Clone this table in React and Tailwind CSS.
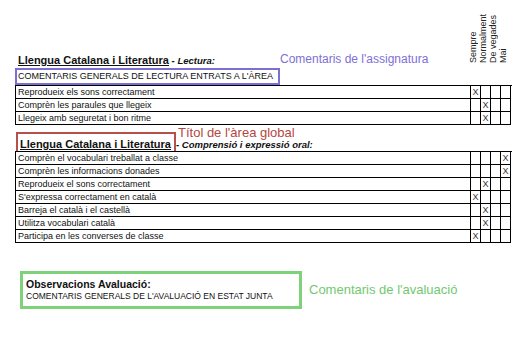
import React from "react";

const rows1 = [
  { text: "Reprodueix els sons correctament", mark: 0 },
  { text: "Comprèn les paraules que llegeix", mark: 1 },
  { text: "Llegeix amb seguretat i bon ritme", mark: 1 },
];

const rows2 = [
  { text: "Comprèn el vocabulari treballat a classe", mark: 3 },
  { text: "Comprèn les informacions donades", mark: 3 },
  { text: "Reprodueix el sons correctament", mark: 1 },
  { text: "S'expressa correctament en català", mark: 0 },
  { text: "Barreja el català i el castellà", mark: 1 },
  { text: "Utilitza vocabulari català", mark: 1 },
  { text: "Participa en les converses de classe", mark: 0 },
];

const headers = ["Sempre", "Normalment", "De vegades", "Mai"];

// one table of items with the 4 "X" columns
const Items = ({ rows }) => (
  <div className="w-[497px] border-t border-l border-black">
    {rows.map((r, i) => (
      <div key={i} className="flex h-[13px]">
        <div className="w-[455px] border-r border-b border-black pl-[2px] text-[9px] leading-[12px] text-[#111]">
          {r.text}
        </div>
        {[0, 1, 2, 3].map((c) => (
          <div
            key={c}
            className="w-[10px] border-r border-b border-black text-center text-[9px] leading-[12px] text-[#333]"
          >
            {r.mark === c ? "X" : ""}
          </div>
        ))}
      </div>
    ))}
  </div>
);

const App = () => {
  return (
    <div className="w-[532px] h-[338px] bg-white font-['Liberation_Sans',Arial,sans-serif] text-black overflow-hidden">
      <div className="pl-[15px]">
        {/* header: title + vertical column labels */}
        <div className="relative flex items-end h-[68px]">
          <div className="w-[455px] pl-[3px] pb-[1px] leading-[12px]">
            <span className="text-[11px] font-bold underline text-[#111]">Llengua Catalana i Literatura</span>
            <span className="text-[9.5px] font-bold italic text-[#111]"> - Lectura:</span>
          </div>
          <div className="absolute left-[265px] top-[52px] text-[12px] leading-[14px] text-[#7d70d6]">
            Comentaris de l'assignatura
          </div>
          <div className="flex self-start mt-[8px] -ml-[2px]">
            {headers.map((h) => (
              <div
                key={h}
                className="w-[10px] h-[55px] rotate-180 [writing-mode:vertical-rl] text-[9px] leading-[10px] text-[#222]"
              >
                {h}
              </div>
            ))}
          </div>
        </div>

        <div className="w-[265px] h-[17px] border-2 border-[#7b6fd4] pl-[1px] text-[9px] leading-[13px] text-[#111]">
          COMENTARIS GENERALS DE LECTURA ENTRATS A L'ÀREA
        </div>
        <Items rows={rows1} />

        {/* second area */}
        <div className="relative flex items-end h-[26px]">
          <div className="ml-[1px] h-[19px] border-2 border-[#b5514a] border-b-0 pl-[2px] pr-[3px] leading-[17px]">
            <span className="text-[11px] font-bold underline text-[#111]">Llengua Catalana i Literatura</span>
          </div>
          <span className="text-[9.5px] font-bold italic leading-[12px] text-[#111]"> - Comprensió i expressió oral:</span>
          <div className="absolute left-[163px] top-[1px] text-[13px] leading-[14px] text-[#b3473f]">
            Títol de l'àrea global
          </div>
        </div>
        <Items rows={rows2} />
      </div>

      {/* evaluation comments */}
      <div className="flex items-center mt-[28px] pl-[20px]">
        <div className="w-[282px] h-[38px] border-[3px] border-[#7ed27a] px-[3px] pt-[4px]">
          <div className="text-[10.5px] font-bold leading-[12px] text-[#111]">Observacions Avaluació:</div>
          <div className="text-[8.5px] leading-[12px] text-[#111]">COMENTARIS GENERALS DE L'AVALUACIÓ EN ESTAT JUNTA</div>
        </div>
        <div className="ml-[7px] text-[13px] leading-[16px] text-[#72c870]">Comentaris de l'avaluació</div>
      </div>
    </div>
  );
};

export default App;
